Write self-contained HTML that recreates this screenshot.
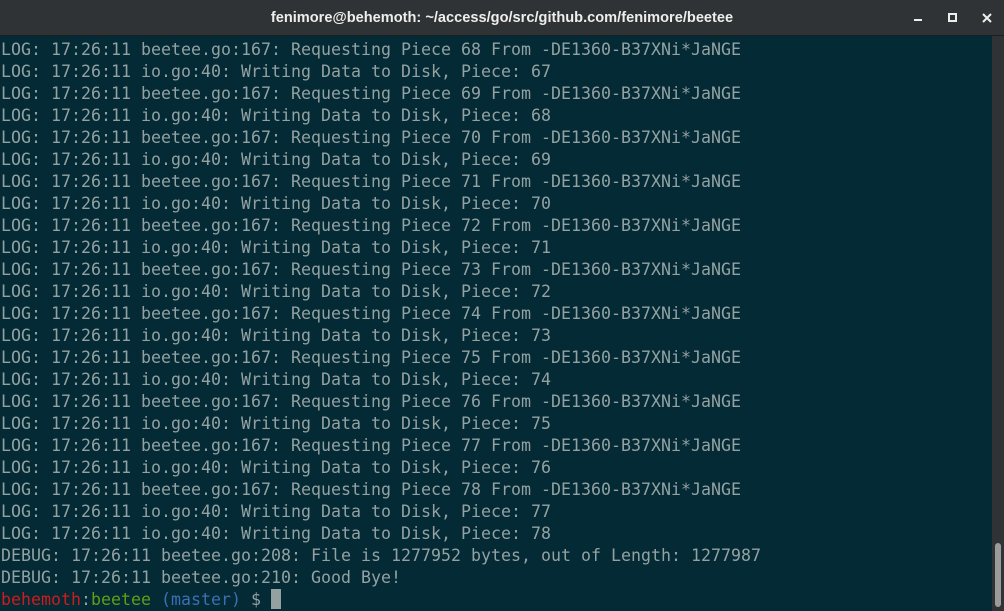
<!DOCTYPE html>
<html><head><style>
html,body{margin:0;padding:0;width:1004px;height:611px;overflow:hidden;background:#042a36;}
.title{position:absolute;left:0;top:0;width:1004px;height:35px;background:#2f3335;border-bottom:1px solid #1c1f20;color:#eeeeec;font:bold 14.6px "Liberation Sans",sans-serif;text-align:center;line-height:36px;}
.title span{position:absolute;left:0;right:0;top:0}
.btn{position:absolute;background:#eeeeec}
pre{position:absolute;left:1px;top:39px;margin:0;font-family:"DejaVu Sans Mono","Liberation Mono",monospace;font-size:16.62px;line-height:22px;color:#93a1a1;}
.sb{position:absolute;left:992px;top:36px;width:12px;height:575px;background:#2f3335}
.thumb{position:absolute;left:995px;top:543px;width:6px;height:64px;border-radius:3px;background:#9a9c9a}
.r{color:#cc1c1c}.g{color:#5f9e16}.b{color:#3c6eb4}
.cur{display:inline-block;width:10px;height:20px;background:#93a1a1;vertical-align:-4px}
</style></head><body>
<div class="title"><span>fenimore@behemoth: ~/access/go/src/github.com/fenimore/beetee</span>
<div class="btn" style="left:914px;top:19px;width:8px;height:2px"></div>
<div style="position:absolute;left:948px;top:13px;width:5px;height:5px;border:2px solid #eeeeec"></div>
<svg style="position:absolute;left:982px;top:13px" width="10" height="10"><path d="M1 1L9 9M9 1L1 9" stroke="#eeeeec" stroke-width="2"/></svg>
</div>
<pre>LOG: 17:26:11 beetee.go:167: Requesting Piece 68 From -DE1360-B37XNi*JaNGE
LOG: 17:26:11 io.go:40: Writing Data to Disk, Piece: 67
LOG: 17:26:11 beetee.go:167: Requesting Piece 69 From -DE1360-B37XNi*JaNGE
LOG: 17:26:11 io.go:40: Writing Data to Disk, Piece: 68
LOG: 17:26:11 beetee.go:167: Requesting Piece 70 From -DE1360-B37XNi*JaNGE
LOG: 17:26:11 io.go:40: Writing Data to Disk, Piece: 69
LOG: 17:26:11 beetee.go:167: Requesting Piece 71 From -DE1360-B37XNi*JaNGE
LOG: 17:26:11 io.go:40: Writing Data to Disk, Piece: 70
LOG: 17:26:11 beetee.go:167: Requesting Piece 72 From -DE1360-B37XNi*JaNGE
LOG: 17:26:11 io.go:40: Writing Data to Disk, Piece: 71
LOG: 17:26:11 beetee.go:167: Requesting Piece 73 From -DE1360-B37XNi*JaNGE
LOG: 17:26:11 io.go:40: Writing Data to Disk, Piece: 72
LOG: 17:26:11 beetee.go:167: Requesting Piece 74 From -DE1360-B37XNi*JaNGE
LOG: 17:26:11 io.go:40: Writing Data to Disk, Piece: 73
LOG: 17:26:11 beetee.go:167: Requesting Piece 75 From -DE1360-B37XNi*JaNGE
LOG: 17:26:11 io.go:40: Writing Data to Disk, Piece: 74
LOG: 17:26:11 beetee.go:167: Requesting Piece 76 From -DE1360-B37XNi*JaNGE
LOG: 17:26:11 io.go:40: Writing Data to Disk, Piece: 75
LOG: 17:26:11 beetee.go:167: Requesting Piece 77 From -DE1360-B37XNi*JaNGE
LOG: 17:26:11 io.go:40: Writing Data to Disk, Piece: 76
LOG: 17:26:11 beetee.go:167: Requesting Piece 78 From -DE1360-B37XNi*JaNGE
LOG: 17:26:11 io.go:40: Writing Data to Disk, Piece: 77
LOG: 17:26:11 io.go:40: Writing Data to Disk, Piece: 78
DEBUG: 17:26:11 beetee.go:208: File is 1277952 bytes, out of Length: 1277987
DEBUG: 17:26:11 beetee.go:210: Good Bye!
<span class="r">behemoth</span>:<span class="g">beetee</span> <span class="b">(master)</span> $ <span class="cur"></span></pre>
<div class="sb"></div><div class="thumb"></div>
</body></html>
